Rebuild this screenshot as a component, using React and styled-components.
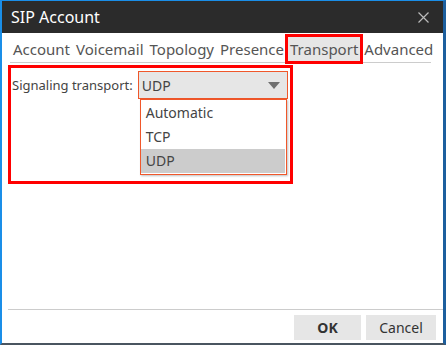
import { createGlobalStyle } from "styled-components";
import styled from "styled-components";

const Global = createGlobalStyle`
  html, body { margin: 0; padding: 0; background: #ffffff; }
  * { box-sizing: border-box; }
`;

const font = `"Noto Sans", "Open Sans", sans-serif`;

const Window = styled.div`
  width: 446px;
  height: 345px;
  display: flex;
  flex-direction: column;
  background: #ffffff;
  border-left: 2px solid #1a8ee8;
  border-top: 1px solid #1a8ee8;
  border-right: 3px solid #1d5f9e;
  border-bottom: 2px solid #4a5560;
  font-family: ${font};
  color: #444444;
`;

const TitleBar = styled.div`
  height: 32px;
  background: #2b2b2b;
  display: flex;
  align-items: center;
  justify-content: space-between;
  padding: 0 14px 0 9px;
  color: #ffffff;
  font-size: 16px;
`;

const Close = styled.svg`
  width: 11px;
  height: 11px;
`;

const Body = styled.div`
  flex: 1;
  display: flex;
  flex-direction: column;
  padding: 2px 6px 0 6px;
`;

const TabBar = styled.div`
  display: flex;
  margin: 0 6px 0 2px;
  height: 28px;
  border-bottom: 1px solid #cccccc;
  align-items: stretch;
`;

const Tab = styled.div`
  padding: 0 3px;
  font-size: 15px;
  line-height: 27px;
  height: 26px;
  margin-top: 1px;
  color: #555555;
  background: ${(p) => (p.$active ? "#e6e6e6" : "transparent")};
  outline: ${(p) => (p.$active ? "3px solid #ff0000" : "none")};
  outline-offset: ${(p) => (p.$active ? "-1px" : "0")};
`;

const Group = styled.div`
  position: relative;
  margin-top: 2px;
  width: 285px;
  height: 119px;
  border: 3px solid #ff0000;
  padding: 3px 0 0 1px;
`;

const Row = styled.div`
  display: flex;
  align-items: center;
  gap: 5px;
`;

const Label = styled.span`
  flex: 0 0 120px;
  white-space: nowrap;
  font-size: 13px;
  color: #444444;
`;

const Combo = styled.div`
  position: relative;
  flex: 0 0 150px;
  height: 28px;
  background: #e6e6e6;
  border: 1px solid #f0572a;
  display: flex;
  align-items: center;
  justify-content: space-between;
  padding: 0 7px 0 3px;
  font-size: 14px;
  color: #444444;
`;

const Arrow = styled.svg`
  width: 12px;
  height: 7px;
`;

const List = styled.div`
  position: absolute;
  top: 27px;
  left: 1px;
  width: 147px;
  display: flex;
  flex-direction: column;
  background: #ffffff;
  border: 1px solid #f0572a;
  box-shadow: 1px 1px 2px rgba(0, 0, 0, 0.25);
  padding: 1px 1px 1px 0;
  z-index: 2;
`;

const Item = styled.div`
  height: 24px;
  line-height: 24px;
  padding-left: 5px;
  font-size: 14px;
  color: #444444;
  background: ${(p) => (p.$selected ? "#cccccc" : "transparent")};
`;

const Footer = styled.div`
  display: flex;
  justify-content: flex-end;
  gap: 5px;
  margin-top: auto;
  border-top: 1px solid #cccccc;
  margin-right: -6px;
  padding: 5px 7px 3px 0;
`;

const Button = styled.button`
  width: ${(p) => p.$w}px;
  height: 25px;
  border: none;
  background: #e6e6e6;
  font-family: ${font};
  font-size: 14px;
  font-weight: ${(p) => (p.$primary ? 700 : 400)};
  color: #333333;
  padding: 0;
`;

const tabs = ["Account", "Voicemail", "Topology", "Presence", "Transport", "Advanced"];

export default function App() {
  return (
    <>
      <Global />
      <Window>
        <TitleBar>
          <span>SIP Account</span>
          <Close viewBox="0 0 11 11">
            <path d="M0.5 0.5 L10.5 10.5 M10.5 0.5 L0.5 10.5" stroke="#bbbbbb" strokeWidth="1.2" fill="none" />
          </Close>
        </TitleBar>
        <Body>
          <TabBar>
            {tabs.map((t) => (
              <Tab key={t} $active={t === "Transport"}>
                {t}
              </Tab>
            ))}
          </TabBar>
          <Group>
            <Row>
              <Label>Signaling transport:</Label>
              <Combo>
                <span>UDP</span>
                <Arrow viewBox="0 0 12 7">
                  <path d="M0 0 L12 0 L6 7 Z" fill="#707070" />
                </Arrow>
                <List>
                  <Item>Automatic</Item>
                  <Item>TCP</Item>
                  <Item $selected>UDP</Item>
                </List>
              </Combo>
            </Row>
          </Group>
          <Footer>
            <Button $w={67} $primary>OK</Button>
            <Button $w={70}>Cancel</Button>
          </Footer>
        </Body>
      </Window>
    </>
  );
}
